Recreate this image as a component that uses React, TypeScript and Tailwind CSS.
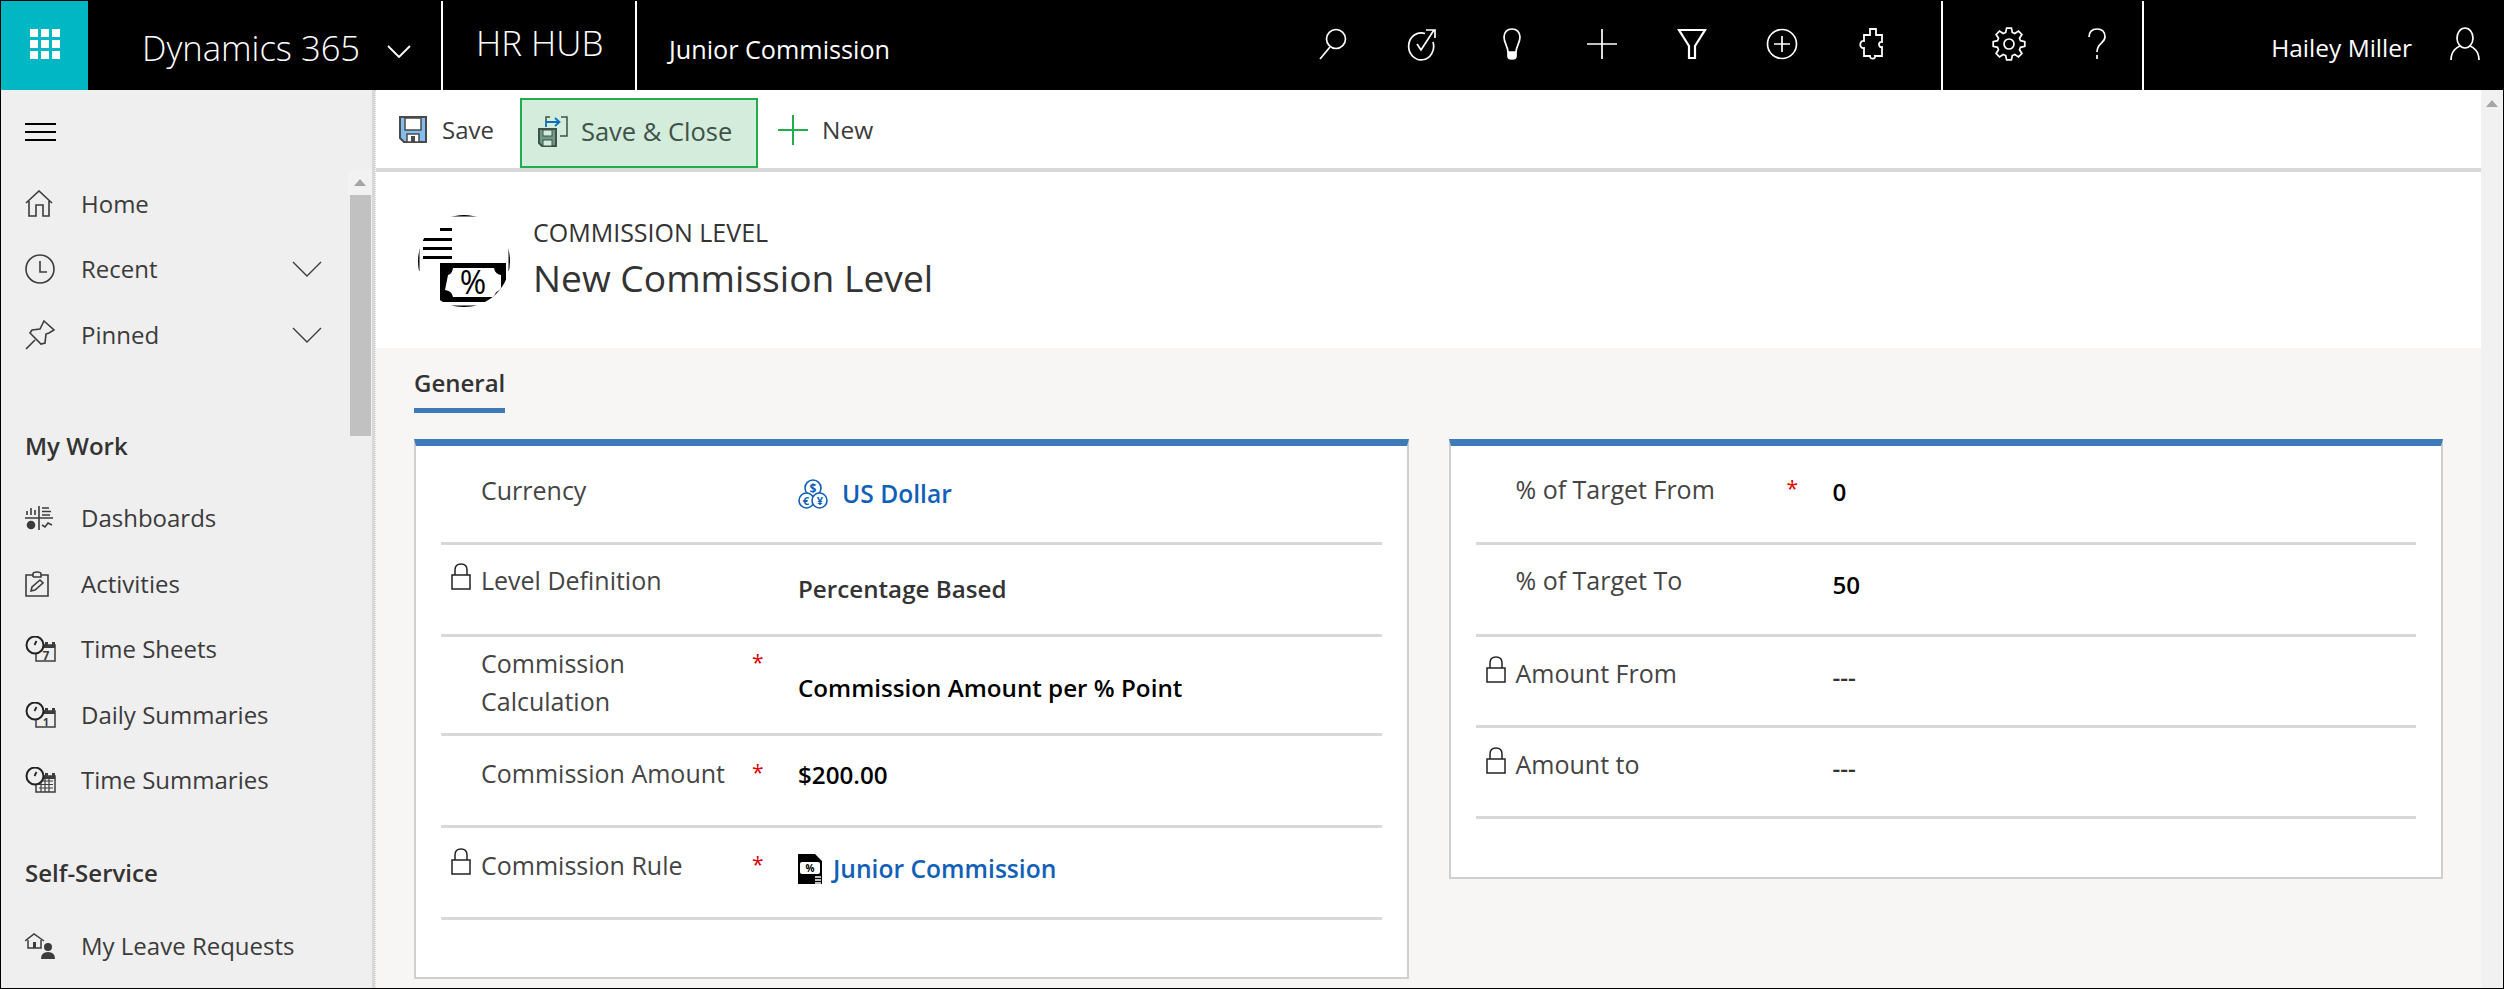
import type { ReactNode } from "react";

// --- top bar icons ---

function TopIcon({ children }: { children: ReactNode }) {
  return (
    <svg width="34" height="34" viewBox="0 0 34 34" fill="none" stroke="white" strokeWidth="1.7">
      {children}
    </svg>
  );
}

function Chevron({ w, h, color, sw }: { w: number; h: number; color: string; sw: number }) {
  return (
    <svg width={w} height={h} viewBox={`0 0 ${w} ${h}`} fill="none" stroke={color} strokeWidth={sw}>
      <path d={`M1 1 L${w / 2} ${h - 1} L${w - 1} 1`} />
    </svg>
  );
}

// 8-tooth cog outline
function gearPath() {
  const pts: string[] = [];
  for (let i = 0; i < 8; i++) {
    const a = (i * Math.PI) / 4;
    const at = (r: number, d: number) => `${(17 + r * Math.cos(a + d)).toFixed(1)} ${(17 + r * Math.sin(a + d)).toFixed(1)}`;
    pts.push(at(12, -0.28), at(16, -0.15), at(16, 0.15), at(12, 0.28));
  }
  return `M${pts.join(" L")} Z`;
}

const TOP_ICONS: ReactNode[] = [
  <>
    <circle cx="21" cy="12" r="9.5" />
    <path d="M15 20 L5 32" />
  </>,
  <>
    <path d="M20 6.5 A12.5 13.5 0 1 0 28 15" />
    <path d="M12 17 L16 23 L29 3" />
    <path d="M21 3 H30 V11" />
  </>,
  <>
    <path d="M13 25 C13 20 9 16 9 10 C9 5 12.5 2 17 2 C21.5 2 25 5 25 10 C25 16 21 20 21 25 Z" />
    <path d="M13 25 V29 Q13 32 17 32 Q21 32 21 29 V25" fill="white" />
  </>,
  <path d="M17 2 V32 M2 17 H32" />,
  <path d="M4 3 H30 L20 19 V31 H14 V19 Z" strokeWidth="2.2" />,
  <>
    <circle cx="17" cy="17" r="14.5" />
    <path d="M17 9 V25 M9 17 H25" />
  </>,
  <path d="M15 2 H21 V8 H27 V15 C23 14 23 21 27 20 V29 H20 C21 32 15 33 15 29 H9 V21 C4 22 4 13 9 14 V8 H15 Z" strokeWidth="1.8" />,
];

// --- command bar icons ---

function SaveIcon() {
  return (
    <svg width="28" height="28" viewBox="0 0 28 28">
      <path d="M1 1 H27 V26 H5 L1 22 Z" fill="#83bcee" stroke="#4a4a4a" strokeWidth="2" />
      <rect x="6" y="2" width="16" height="12" fill="white" stroke="#4a4a4a" strokeWidth="1.5" />
      <rect x="8" y="18" width="12" height="8" fill="white" stroke="#4a4a4a" strokeWidth="1.5" />
      <rect x="12" y="20" width="4" height="6" fill="#4a4a4a" />
    </svg>
  );
}

function SaveCloseIcon() {
  return (
    <svg width="30" height="32" viewBox="0 0 30 32" fill="none">
      <path d="M1 14 H18 V31 H4 L1 28 Z" fill="#6f9a8a" stroke="#3f5248" strokeWidth="2" />
      <rect x="5" y="15" width="9" height="6" fill="#d3ecdb" stroke="#3f5248" />
      <rect x="5" y="25" width="9" height="6" fill="#d3ecdb" stroke="#3f5248" />
      <path d="M8 7 V2 H12 M23 2 H29 V21 H22" stroke="#3f5248" strokeWidth="1.5" />
      <path d="M8 12 V7 H21 M17 3 L21.5 7 L17 11" stroke="#106ebe" strokeWidth="1.8" />
    </svg>
  );
}

function CommissionIcon() {
  return (
    <svg width="92" height="92" viewBox="0 0 92 92">
      <defs>
        <clipPath id="disc">
          <circle cx="46" cy="46" r="46" />
        </clipPath>
      </defs>
      <g clipPath="url(#disc)">
        <rect x="0" y="0" width="92" height="92" fill="white" />
        <rect x="32" y="0" width="30" height="1.5" fill="black" />
        <rect x="30" y="90.5" width="30" height="1.5" fill="black" />
        <rect x="22" y="13" width="12" height="3" fill="black" />
        <rect x="5" y="23" width="29" height="3" fill="black" />
        <rect x="5" y="32" width="29" height="3" fill="black" />
        <rect x="5" y="41" width="29" height="3" fill="black" />
        <rect x="0" y="32" width="1.5" height="24" fill="black" />
        <rect x="90.5" y="32" width="1.5" height="24" fill="black" />
        <rect x="22" y="48" width="66" height="39" fill="black" />
        <path d="M30 60 Q34 59 35 53 H76 Q77 59 83 60 V75 Q77 76 76 82 H35 Q34 76 27 75 Z" fill="white" />
        <text x="55" y="79" fontSize="32" fontWeight="500" textAnchor="middle" fill="black" fontFamily="'Open Sans',sans-serif">
          %
        </text>
      </g>
    </svg>
  );
}

// --- sidebar icons ---

const sb = { fill: "none", stroke: "#3c3c3c", strokeWidth: 1.6 };

function ClockBadge({ children }: { children: ReactNode }) {
  return (
    <svg width="32" height="26" viewBox="0 0 32 26">
      <rect x="11" y="9" width="19" height="16" fill="#efefef" stroke="#3c3c3c" strokeWidth="1.5" />
      <rect x="20" y="6" width="3" height="4" fill="#3c3c3c" />
      <rect x="27" y="6" width="3" height="4" fill="#3c3c3c" />
      <rect x="11" y="9" width="19" height="3" fill="#3c3c3c" />
      {children}
      <circle cx="10" cy="9" r="8.5" fill="#efefef" stroke="#222" strokeWidth="2" />
      <path d="M11.5 5 L9.5 9" stroke="#222" strokeWidth="1.8" fill="none" />
    </svg>
  );
}

const SIDE_ICONS: Record<string, ReactNode> = {
  Home: (
    <svg width="28" height="28" viewBox="0 0 28 28" {...sb}>
      <path d="M1 13 L14 1 L27 13 M4 11 V26 H11 V15 H18 V26 H24 V11" />
    </svg>
  ),
  Recent: (
    <svg width="30" height="30" viewBox="0 0 30 30" {...sb}>
      <circle cx="15" cy="15" r="14" />
      <path d="M15 7 V18 H22" />
    </svg>
  ),
  Pinned: (
    <svg width="30" height="30" viewBox="0 0 30 30" {...sb}>
      <path d="M1 29 L10 20 M19 1 L29 10 L24 13 L21 14 L20 23 L16 24 L5 13 L7 10 L15 9 L17 5 Z" />
    </svg>
  ),
  Dashboards: (
    <svg width="28" height="24" viewBox="0 0 28 24" {...sb}>
      <path d="M0 12 H28 M14 0 V24" />
      <path d="M2 9 V5 M6 9 V2 M10 9 V4 M17 2 H24 M17 5.5 H26 M17 9 H25" />
      <path d="M17 19 L20 21 L23 17 L27 19" />
      <circle cx="6" cy="19" r="3.5" fill="#3c3c3c" />
    </svg>
  ),
  Activities: (
    <svg width="24" height="26" viewBox="0 0 24 26" {...sb}>
      <path d="M8 4 H1 V25 H23 V4 H16" />
      <path d="M8 6 V3 Q8 1 12 1 Q16 1 16 3 V6 H8" />
      <path d="M6 20 L7 16 L15 9 L18 12 L10 19 Z" />
    </svg>
  ),
  "Time Sheets": (
    <ClockBadge>
      <text x="21" y="24" fontSize="12" fontWeight="700" fill="#3c3c3c" textAnchor="middle" fontFamily="'Open Sans',sans-serif">
        7
      </text>
    </ClockBadge>
  ),
  "Daily Summaries": (
    <ClockBadge>
      <text x="21" y="24" fontSize="11" fontWeight="700" fill="#3c3c3c" textAnchor="middle" fontFamily="'Open Sans',sans-serif">
        1
      </text>
    </ClockBadge>
  ),
  "Time Summaries": (
    <ClockBadge>
      <path d="M14 14 H28 M14 17.5 H28 M14 21 H28 M16 12 V25 M20 12 V25 M24 12 V25" stroke="#3c3c3c" strokeWidth="1.2" fill="none" />
    </ClockBadge>
  ),
  "My Leave Requests": (
    <svg width="32" height="26" viewBox="0 0 32 26">
      <path d="M0 8 L9 1 L19 8" fill="none" stroke="#3c3c3c" strokeWidth="1.5" />
      <path d="M3 7 V15 H16 V7" fill="none" stroke="#3c3c3c" strokeWidth="1.5" />
      <rect x="8" y="9" width="3" height="6" fill="#3c3c3c" />
      <circle cx="23" cy="14" r="4" fill="#3c3c3c" />
      <path d="M16 26 Q16 19 23 19 Q30 19 30 26 Z" fill="#3c3c3c" />
    </svg>
  ),
};

function SideItem({ label, chevron }: { label: string; chevron?: boolean }) {
  return (
    <div className="flex h-[65.5px] items-center pl-[24px]">
      <div className="flex w-[56px] shrink-0 items-center">{SIDE_ICONS[label]}</div>
      <span className="text-[24px] text-[#3b3b3b]">{label}</span>
      {chevron && (
        <div className="ml-auto mr-[26px]">
          <Chevron w={30} h={16} color="#3c3c3c" sw={1.4} />
        </div>
      )}
    </div>
  );
}

function Sidebar() {
  return (
    <div className="flex w-[374px] shrink-0 border-r-[3px] border-[#d8d8d8] bg-[#efefef]">
      <div className="w-[347px] shrink-0">
        <div className="flex h-[81px] items-center pl-[24px] pt-[2px]">
          <div className="flex w-[31px] flex-col gap-[6px]">
            <div className="h-[2px] bg-black" />
            <div className="h-[2px] bg-black" />
            <div className="h-[2px] bg-black" />
          </div>
        </div>
        <SideItem label="Home" />
        <SideItem label="Recent" chevron />
        <SideItem label="Pinned" chevron />
        <div className="mb-[22px] mt-[60px] pl-[24px] text-[24px] font-semibold leading-[36px] text-[#333]">My Work</div>
        <SideItem label="Dashboards" />
        <SideItem label="Activities" />
        <SideItem label="Time Sheets" />
        <SideItem label="Daily Summaries" />
        <SideItem label="Time Summaries" />
        <div className="mb-[22px] mt-[42px] pl-[24px] text-[24px] font-semibold leading-[36px] text-[#333]">Self-Service</div>
        <SideItem label="My Leave Requests" />
      </div>
      <div className="flex w-[24px] shrink-0 flex-col pt-[80px]">
        <div className="flex h-[25px] items-center justify-center bg-[#f2f2f2]">
          <div className="h-0 w-0 border-x-[6px] border-b-[7px] border-x-transparent border-b-[#a6a6a6]" />
        </div>
        <div className="ml-[2px] h-[241px] w-[21px] bg-[#c1c1c1]" />
      </div>
    </div>
  );
}

// --- form ---

function Lock() {
  return (
    <svg width="20" height="27" viewBox="0 0 20 27" fill="none" stroke="#222" strokeWidth="1.5">
      <rect x="1" y="12" width="18" height="14" />
      <path d="M4 12 V7 Q4 1 10 1 Q16 1 16 7 V12" />
    </svg>
  );
}

function CurrencyIcon() {
  return (
    <svg width="30" height="30" viewBox="0 0 30 30" fill="white" stroke="#1160b7" strokeWidth="1.6">
      <circle cx="15" cy="9" r="8" />
      <circle cx="8.5" cy="21.5" r="7.5" />
      <circle cx="21.5" cy="21.5" r="7.5" />
      <text x="15" y="13.5" fontSize="12" fontWeight="700" textAnchor="middle" fill="#1160b7" stroke="none" fontFamily="'Open Sans',sans-serif">
        $
      </text>
      <text x="8" y="26" fontSize="11" fontWeight="700" textAnchor="middle" fill="#1160b7" stroke="none" fontFamily="'Open Sans',sans-serif">
        €
      </text>
      <text x="22" y="26" fontSize="11" fontWeight="700" textAnchor="middle" fill="#1160b7" stroke="none" fontFamily="'Open Sans',sans-serif">
        ¥
      </text>
    </svg>
  );
}

function RuleIcon() {
  return (
    <svg width="24" height="30" viewBox="0 0 24 30">
      <path d="M0 0 H17 L24 7 V30 H0 Z" fill="black" />
      <rect x="2" y="8" width="20" height="12" rx="2" fill="white" />
      <text x="12" y="18" fontSize="10" fontWeight="700" textAnchor="middle" fill="black" fontFamily="'Open Sans',sans-serif">
        %
      </text>
      <path d="M17 23 H23 M17 26 H23 M17 29 H23" stroke="white" strokeWidth="1.5" />
    </svg>
  );
}

type FieldProps = {
  height: string;
  labelPad: string;
  valuePad: string;
  lock?: boolean;
  label: ReactNode;
  required?: boolean;
  value: ReactNode;
};

function Field({ height, labelPad, valuePad, lock, label, required, value }: FieldProps) {
  return (
    <div className={`flex border-b-[3px] border-[#d8d8d8] ${height}`}>
      <div className={`flex w-[40px] shrink-0 justify-start pl-[10px] ${labelPad}`}>{lock && <Lock />}</div>
      <div className={`-mt-[2px] w-[271px] shrink-0 text-[25px] leading-[38px] text-[#444] ${labelPad}`}>{label}</div>
      <div className={`-mt-[3px] w-[46px] shrink-0 text-[21px] leading-[38px] text-[#e00000] ${labelPad}`}>{required && "*"}</div>
      <div className={`flex-1 ${valuePad}`}>{value}</div>
    </div>
  );
}

function Value({ children, dim }: { children: ReactNode; dim?: boolean }) {
  return <div className={`text-[24.2px] font-semibold leading-[36px] ${dim ? "text-[#333]" : "text-black"}`}>{children}</div>;
}

function Link({ icon, children, gap }: { icon: ReactNode; children: ReactNode; gap: string }) {
  return (
    <div className={`flex items-center text-[24.6px] font-semibold leading-[36px] text-[#1160b7] ${gap}`}>
      {icon}
      <span>{children}</span>
    </div>
  );
}

function Card({ children, height }: { children: ReactNode; height: string }) {
  return <div className={`border-x-2 border-b-2 border-t-[7px] border-[#cfcfcf] border-t-[#3c7ab8] bg-white px-[25px] ${height}`}>{children}</div>;
}

export default function App() {
  return (
    <div className="flex h-[989px] w-[2504px] flex-col overflow-hidden border border-black bg-white [font-family:'Open_Sans',sans-serif]">
      {/* top bar */}
      <div className="flex h-[89px] shrink-0 bg-black text-white">
        <div className="grid h-[89px] w-[87px] shrink-0 place-items-center bg-[#00b7c3] pb-[3px]">
          <div className="grid grid-cols-3 gap-[3px]">
            {Array.from({ length: 9 }, (_, i) => (
              <div key={i} className="h-[8px] w-[8px] bg-white" />
            ))}
          </div>
        </div>
        <div className="flex w-[355px] shrink-0 items-center border-r-2 border-white pl-[54px] pt-[4px]">
          <span className="text-[34.6px] font-light">Dynamics 365</span>
          <div className="ml-[27px] mt-[8px]">
            <Chevron w={24} h={13} color="white" sw={1.8} />
          </div>
        </div>
        <div className="flex w-[194px] shrink-0 items-center border-r-2 border-white pb-[4px] pl-[33px]">
          <span className="text-[35px] font-light">HR HUB</span>
        </div>
        <div className="flex w-[650px] shrink-0 items-center pl-[32px] pt-[8px]">
          <span className="text-[25.2px]">Junior Commission</span>
        </div>
        <div className="flex h-[86px] items-center">
          {TOP_ICONS.map((icon, i) => (
            <div key={i} className="grid w-[90px] shrink-0 place-items-center">
              <TopIcon>{icon}</TopIcon>
            </div>
          ))}
        </div>
        <div className="ml-[24px] flex w-[203px] shrink-0 border-x-2 border-white">
          <div className="flex h-[86px] items-center pl-[49px]">
            <TopIcon>
              <path d={gearPath()} />
              <circle cx="17" cy="17" r="5" />
            </TopIcon>
            <svg width="20" height="32" viewBox="0 0 20 32" fill="none" stroke="white" strokeWidth="1.7" className="ml-[61px]">
              <path d="M2 9 C2 4 5 1 10 1 C15 1 18 4 18 9 C18 15 10 15 10 24 M10 27 V31" />
            </svg>
          </div>
        </div>
        <div className="flex flex-1 justify-end pr-[22px]">
          <span className="pt-[29px] text-[24.5px] leading-[36px]">Hailey Miller</span>
          <svg width="32" height="34" viewBox="0 0 32 34" fill="none" stroke="white" strokeWidth="1.7" className="ml-[37px] mt-[26px]">
            <ellipse cx="16" cy="11" rx="8" ry="10" />
            <path d="M2 33 C2 24 8 20 11 19 M30 33 C30 24 24 20 21 19" />
          </svg>
        </div>
      </div>

      <div className="flex min-h-0 flex-1">
        <Sidebar />
        <div className="flex min-w-0 flex-1 flex-col border-l border-dotted border-[#d8d8d8]">
          {/* command bar */}
          <div className="flex h-[82px] shrink-0 items-start border-b-4 border-[#d8d8d8] pl-[23px]">
            <div className="flex h-[78px] items-center pt-[2px]">
              <SaveIcon />
              <span className="ml-[15px] text-[24px] text-[#3b3b3b]">Save</span>
            </div>
            <div className="ml-[26px] mt-[8px] flex h-[70px] w-[238px] items-center border-2 border-[#21ad4b] bg-[#d3ecdb] pb-[4px] pl-[16px]">
              <SaveCloseIcon />
              <span className="ml-[13px] text-[25.5px] text-[#3f5248]">Save &amp; Close</span>
            </div>
            <div className="ml-[20px] flex h-[78px] items-center pt-[2px]">
              <svg width="30" height="30" viewBox="0 0 30 30" stroke="#21ad4b" strokeWidth="2">
                <path d="M15 0 V30 M0 15 H30" />
              </svg>
              <span className="ml-[14px] text-[24.5px] text-[#3b3b3b]">New</span>
            </div>
          </div>

          {/* form header */}
          <div className="flex h-[176px] shrink-0 gap-[23px] pl-[42px] pt-[43px]">
            <CommissionIcon />
            <div>
              <div className="text-[25px] leading-[34px] text-[#333]">COMMISSION LEVEL</div>
              <div className="mt-[7px] text-[37.2px] leading-[44px] text-[#333]">New Commission Level</div>
            </div>
          </div>

          {/* form body */}
          <div className="min-h-0 flex-1 bg-[#f7f6f4] px-[38px]">
            <div className="flex h-[66px] items-start pt-[17px]">
              <div className="flex h-[48px] flex-col justify-between">
                <span className="text-[24px] font-semibold leading-[36px] text-[#333]">General</span>
                <div className="h-[5px] bg-[#3c7ab8]" />
              </div>
            </div>
            <div className="mt-[25px] grid grid-cols-2 items-start gap-[40px]">
              <Card height="h-[540px]">
                <Field height="h-[99px]" labelPad="pt-[27px]" valuePad="pt-[30px]" label="Currency" value={<Link icon={<CurrencyIcon />} gap="gap-[14px]">US Dollar</Link>} />
                <Field height="h-[92px]" labelPad="pt-[18px]" valuePad="pt-[26px]" lock label="Level Definition" value={<Value dim>Percentage Based</Value>} />
                <Field height="h-[99px]" labelPad="pt-[9px]" valuePad="pt-[33px]" label={<>Commission<br />Calculation</>} required value={<Value>Commission Amount per % Point</Value>} />
                <Field height="h-[92px]" labelPad="pt-[20px]" valuePad="pt-[21px]" label="Commission Amount" required value={<Value>$200.00</Value>} />
                <Field height="h-[92px]" labelPad="pt-[20px]" valuePad="pt-[23px]" lock label="Commission Rule" required value={<Link icon={<RuleIcon />} gap="gap-[11px]">Junior Commission</Link>} />
              </Card>
              <Card height="h-[440px]">
                <Field height="h-[99px]" labelPad="pt-[26px]" valuePad="pt-[28px]" label="% of Target From" required value={<Value>0</Value>} />
                <Field height="h-[92px]" labelPad="pt-[18px]" valuePad="pt-[22px]" label="% of Target To" value={<Value>50</Value>} />
                <Field height="h-[91px]" labelPad="pt-[19px]" valuePad="pt-[22px]" lock label="Amount From" value={<Value dim>---</Value>} />
                <Field height="h-[91px]" labelPad="pt-[19px]" valuePad="pt-[22px]" lock label="Amount to" value={<Value dim>---</Value>} />
              </Card>
            </div>
          </div>
        </div>
        {/* page scrollbar track */}
        <div className="flex w-[22px] shrink-0 justify-center bg-[#f1f1f1] pt-[10px]">
          <div className="h-0 w-0 border-x-[6px] border-b-[7px] border-x-transparent border-b-[#a6a6a6]" />
        </div>
      </div>
    </div>
  );
}
